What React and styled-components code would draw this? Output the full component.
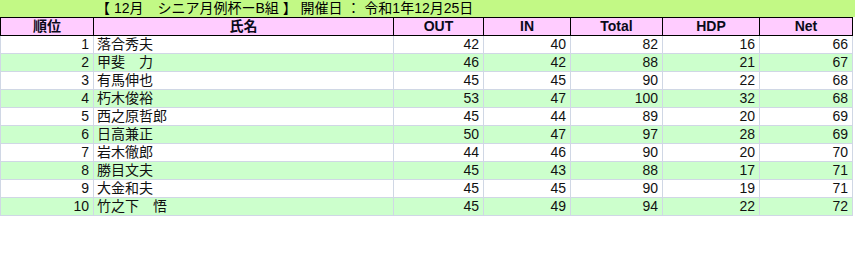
import React from "react";
import styled, { createGlobalStyle } from "styled-components";

const Global = createGlobalStyle`
  html, body { margin: 0; padding: 0; background: #fff; }
  body { font-family: "Liberation Sans", "Noto Sans CJK JP", sans-serif; }
`;

const COLS = "93px 300px 90px 87px 92px 97px 93px";

const Sheet = styled.div`
  width: 855px;
  display: flex;
  flex-direction: column;
`;

const Title = styled.div`
  height: 17px;
  background: #c2f985;
  padding-left: 96px;
  font-family: "Liberation Sans", "Noto Sans CJK JP", sans-serif;
  font-size: 14px;
  line-height: 17px;
  color: #000;
  white-space: pre;
`;

const Row = styled.div`
  display: grid;
  grid-template-columns: ${COLS};
  width: 853px;
  box-sizing: border-box;
  border-left: 1px solid ${(p) => (p.$head ? "#000" : "#d0d7e5")};
  border-top: ${(p) => (p.$head ? "1px solid #000" : "none")};
  border-bottom: 1px solid ${(p) => (p.$head ? "#000" : "#d0d7e5")};
  background: ${(p) => (p.$head ? "#ffccff" : p.$alt ? "#ccffcc" : "#fff")};
  height: ${(p) => (p.$head ? "19px" : "18px")};
`;

const Cell = styled.div`
  box-sizing: border-box;
  border-right: 1px solid ${(p) => (p.$head ? "#000" : "#d0d7e5")};
  height: 17px;
  line-height: 17px;
  font-size: 14px;
  font-weight: ${(p) => (p.$head ? 700 : 400)};
  text-align: ${(p) => p.$align || "right"};
  padding: ${(p) => (p.$align === "left" ? "0 0 0 3px" : p.$align === "center" ? "0" : "0 4px 0 0")};
  color: ${(p) => (p.$head ? "#0a0a1a" : "#111")};
  white-space: pre;
  overflow: hidden;
`;

const data = [
  [1, "落合秀夫", 42, 40, 82, 16, 66],
  [2, "甲斐　力", 46, 42, 88, 21, 67],
  [3, "有馬伸也", 45, 45, 90, 22, 68],
  [4, "朽木俊裕", 53, 47, 100, 32, 68],
  [5, "西之原哲郎", 45, 44, 89, 20, 69],
  [6, "日高兼正", 50, 47, 97, 28, 69],
  [7, "岩木徹郎", 44, 46, 90, 20, 70],
  [8, "勝目文夫", 45, 43, 88, 17, 71],
  [9, "大金和夫", 45, 45, 90, 19, 71],
  [10, "竹之下　悟", 45, 49, 94, 22, 72],
];

const heads = ["順位", "氏名", "OUT", "IN", "Total", "HDP", "Net"];

export default function App() {
  return (
    <>
      <Global />
      <Sheet>
        <Title>{"【 12月　シニア月例杯ーB組 】 開催日 ： 令和1年12月25日"}</Title>
        <Row $head>
          {heads.map((h) => (
            <Cell key={h} $head $align="center">
              {h}
            </Cell>
          ))}
        </Row>
        {data.map((r, i) => (
          <Row key={r[0]} $alt={i % 2 === 1}>
            <Cell>{r[0]}</Cell>
            <Cell $align="left">{r[1]}</Cell>
            <Cell>{r[2]}</Cell>
            <Cell>{r[3]}</Cell>
            <Cell>{r[4]}</Cell>
            <Cell>{r[5]}</Cell>
            <Cell>{r[6]}</Cell>
          </Row>
        ))}
      </Sheet>
    </>
  );
}
